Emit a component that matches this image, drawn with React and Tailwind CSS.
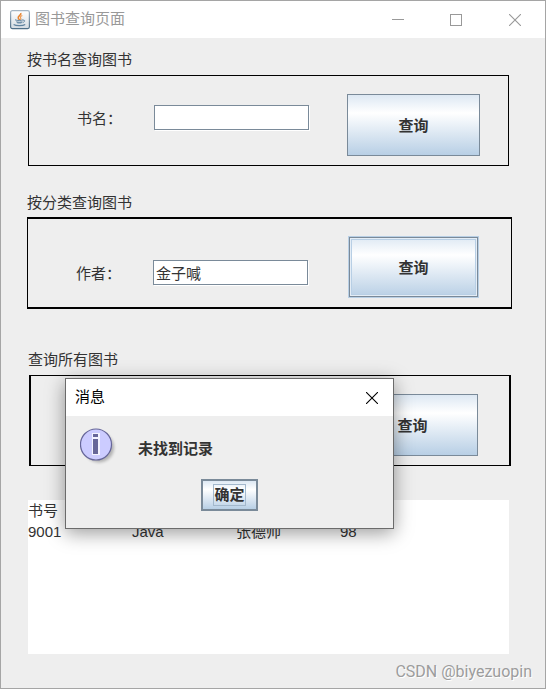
import { useState } from "react";
import clsx from "clsx";

const libros = [{ id: "9001", nombre: "Java", autor: "张德帅", precio: "98" }];

const JavaIcon = () => (
  <svg viewBox="0 0 20 20" className="w-5 h-5 shrink-0" aria-hidden="true">
    <defs>
      <linearGradient id="javaBg" x1="0" y1="0" x2="0" y2="1">
        <stop offset="0" stopColor="#ffffff" />
        <stop offset="1" stopColor="#d3dbe2" />
      </linearGradient>
      <linearGradient id="javaBorder" x1="0" y1="0" x2="0" y2="1">
        <stop offset="0" stopColor="#a3b4c3" />
        <stop offset="1" stopColor="#4f6f88" />
      </linearGradient>
    </defs>
    <rect x="0.6" y="0.6" width="18.8" height="18" rx="1.8" fill="url(#javaBg)" stroke="url(#javaBorder)" strokeWidth="1.2" />
    <path d="M10.8 3c1 2-3.4 3.2-2.6 5 .3.8 1 1.3 1.4 2" fill="none" stroke="#e8832e" strokeWidth="1.5" />
    <path d="M12.3 5.500c-2 .8-2.300 1.700-1.600 2.600.5.700.2 1.200-.3 1.700" fill="none" stroke="#ee9a52" strokeWidth="1.2" />
    <path d="M5 9.800c2 .9 6.500.8 8.200 0" fill="none" stroke="#5f829f" strokeWidth="1" />
    <path d="M6 11.300c.4 1 .8 1.800 1.700 2.200h3.400c.9-.4 1.300-1.200 1.500-2.200-2 .5-4.600.5-6.600 0z" fill="#6f8fa9" />
    <path d="M13 10.200c2.300-.5 2.300 1.700-.4 2.400" fill="none" stroke="#5f829f" strokeWidth="0.9" />
    <path d="M3.600 14.600c2.400 1.500 9.300 1.500 11.600-.1" fill="none" stroke="#5f829f" strokeWidth="1.2" />
  </svg>
);

const InfoIcon = () => (
  <svg viewBox="0 0 38 38" className="w-[38px] h-[38px] shrink-0" aria-hidden="true">
    <defs>
      <filter id="infoShadow" x="-20%" y="-20%" width="150%" height="150%">
        <feGaussianBlur stdDeviation="1.5" />
      </filter>
    </defs>
    <circle cx="19" cy="19.5" r="15" fill="#000000" opacity="0.25" filter="url(#infoShadow)" />
    <circle cx="16" cy="16.5" r="15.5" fill="#ccccff" stroke="#666699" strokeWidth="1.2" />
    <path d="M12 5h8v22h-8z" fill="#f2f2ff" />
    <path d="M13 6h5v3h-5zM13 11h5v15h-5z" fill="#666699" />
  </svg>
);

const CloseIcon = () => (
  <svg viewBox="0 0 12 12" className="w-3 h-3" aria-hidden="true">
    <path d="M0 0L12 12M12 0L0 12" stroke="currentColor" strokeWidth="1.1" />
  </svg>
);

const BotonConsulta = ({ activo, className }) => (
  <button
    type="submit"
    className={clsx(
      "h-[62px] shrink-0 border bg-linear-to-b from-[#dde8f3] via-white via-30% to-[#b8cfe5] pt-0.5 text-[15px] font-bold text-[#333333]",
      activo
        ? "border-[#b8cfe5] shadow-[inset_0_0_0_1px_#7a8a99,inset_0_0_0_2px_#e4edf6,inset_0_0_0_3px_#b8cfe5]"
        : "border-[#7a8a99]",
      className,
    )}
  >
    查询
  </button>
);

const Campo = ({ id, etiqueta, value, onChange, className }) => (
  <div className={clsx("flex flex-1 min-w-0 items-center", className)}>
    <label htmlFor={id} className="w-[77px] shrink-0 pt-0.5 leading-5">
      {etiqueta}
    </label>
    <input
      id={id}
      type="text"
      value={value}
      onChange={(e) => onChange(e.target.value)}
      className="h-[25px] flex-1 min-w-0 border border-[#7a8a99] bg-white px-[2px] text-[15px] text-[#333333] shadow-[1px_1px_0_#ffffff] focus:outline-none"
    />
  </div>
);

const App = () => {
  const [nombre, setNombre] = useState("");
  const [autor, setAutor] = useState("金子喊");
  const [mensaje, setMensaje] = useState("未找到记录");

  const handleSubmit = (e) => {
    e.preventDefault();
    setMensaje("未找到记录");
  };

  return (
    <div className="relative flex min-h-screen flex-col border border-[#a5a5a5] bg-[#eeeeee] font-['Liberation_Sans','Noto_Sans_CJK_SC',sans-serif] text-[15px] text-[#333333]">
      {/* Barra de título */}
      <header className="flex h-[37px] items-center bg-white pl-[9px] text-[#999999]">
        <JavaIcon />
        <h1 className="flex-1 pl-[5px]">图书查询页面</h1>
        <button aria-label="最小化" className="flex h-full w-[58px] items-center justify-center">
          <span className="h-px w-3 bg-[#999999]" />
        </button>
        <button aria-label="最大化" className="flex h-full w-[58px] items-center justify-center">
          <span className="h-3 w-3 border border-[#999999]" />
        </button>
        <button aria-label="关闭" className="flex h-full w-[60px] items-center justify-center">
          <CloseIcon />
        </button>
      </header>

      <main className="pt-3 pr-9 pl-[27px]">
        {/* Consulta por nombre */}
        <section>
          <h2 className="-ml-px leading-5">按书名查询图书</h2>
          <form
            onSubmit={handleSubmit}
            className="mt-[5px] flex h-[91px] items-start border border-black pt-[18px] pr-7 pl-12"
          >
            <Campo id="nombre" etiqueta="书名：" value={nombre} onChange={setNombre} className="mt-[11px]" />
            <BotonConsulta className="ml-[38px] w-[133px]" />
          </form>
        </section>

        {/* Consulta por categoría */}
        <section className="-mr-[3px] -ml-px mt-[27px]">
          <h2 className="leading-5">按分类查询图书</h2>
          <form
            onSubmit={handleSubmit}
            className="mt-1 flex h-[92px] items-start border-x border-y-2 border-black pt-[17px] pr-8 pl-12"
          >
            <Campo id="autor" etiqueta="作者：" value={autor} onChange={setAutor} className="mt-6" />
            <BotonConsulta activo className="ml-10 w-[131px]" />
          </form>
        </section>

        {/* Todos los libros */}
        <section className="-mr-[2px] mt-[41px]">
          <h2 className="leading-5">查询所有图书</h2>
          <form
            onSubmit={handleSubmit}
            className="mt-[5px] ml-px flex h-[91px] items-start justify-end border-x-2 border-y border-black pt-[18px] pr-[31px]"
          >
            <BotonConsulta className="w-[131px]" />
          </form>
        </section>

        <div className="mt-[34px] h-[154px] overflow-hidden bg-white">
          <table className="table-fixed text-left leading-[21px]">
            <thead>
              <tr>
                <th className="w-[104px] p-0 font-normal">书号</th>
                <th className="w-[104px] p-0" />
                <th className="w-[104px] p-0" />
                <th className="w-[104px] p-0" />
              </tr>
            </thead>
            <tbody>
              {libros.map((libro) => (
                <tr key={libro.id}>
                  <td className="p-0">{libro.id}</td>
                  <td className="p-0">{libro.nombre}</td>
                  <td className="p-0">{libro.autor}</td>
                  <td className="p-0">{libro.precio}</td>
                </tr>
              ))}
            </tbody>
          </table>
        </div>
      </main>

      <p className="absolute right-[13px] bottom-1 font-[Roboto,sans-serif] text-[16px] leading-6 text-[#9c9c9c] [text-shadow:1px_1px_0_#ffffff]">
        CSDN @biyezuopin
      </p>

      {/* Cuadro de mensaje */}
      {mensaje && (
        <div
          role="dialog"
          aria-labelledby="tituloMensaje"
          className="absolute top-[377px] left-16 w-[329px] border border-[#6b6b6b] bg-[#eeeeee] shadow-[0_4px_18px_rgba(0,0,0,0.4)]"
        >
          <div className="flex h-[37px] items-center justify-between bg-white pr-[15px] pl-[9px] text-black">
            <h2 id="tituloMensaje">消息</h2>
            <button aria-label="关闭" onClick={() => setMensaje("")}>
              <CloseIcon />
            </button>
          </div>
          <div className="flex items-center pt-3 pl-[14px]">
            <InfoIcon />
            <p className="pt-1 pl-5 font-bold leading-5">{mensaje}</p>
          </div>
          <div className="flex justify-center pt-[13px] pb-[17px]">
            <button
              onClick={() => setMensaje("")}
              className="flex h-8 w-[57px] items-center justify-center border-2 border-[#7a8a99] bg-linear-to-b from-[#dde8f3] via-white via-30% to-[#b8cfe5] font-bold"
            >
              <span className="border border-[#a3b8cc] leading-5">确定</span>
            </button>
          </div>
        </div>
      )}
    </div>
  );
};

export default App;
